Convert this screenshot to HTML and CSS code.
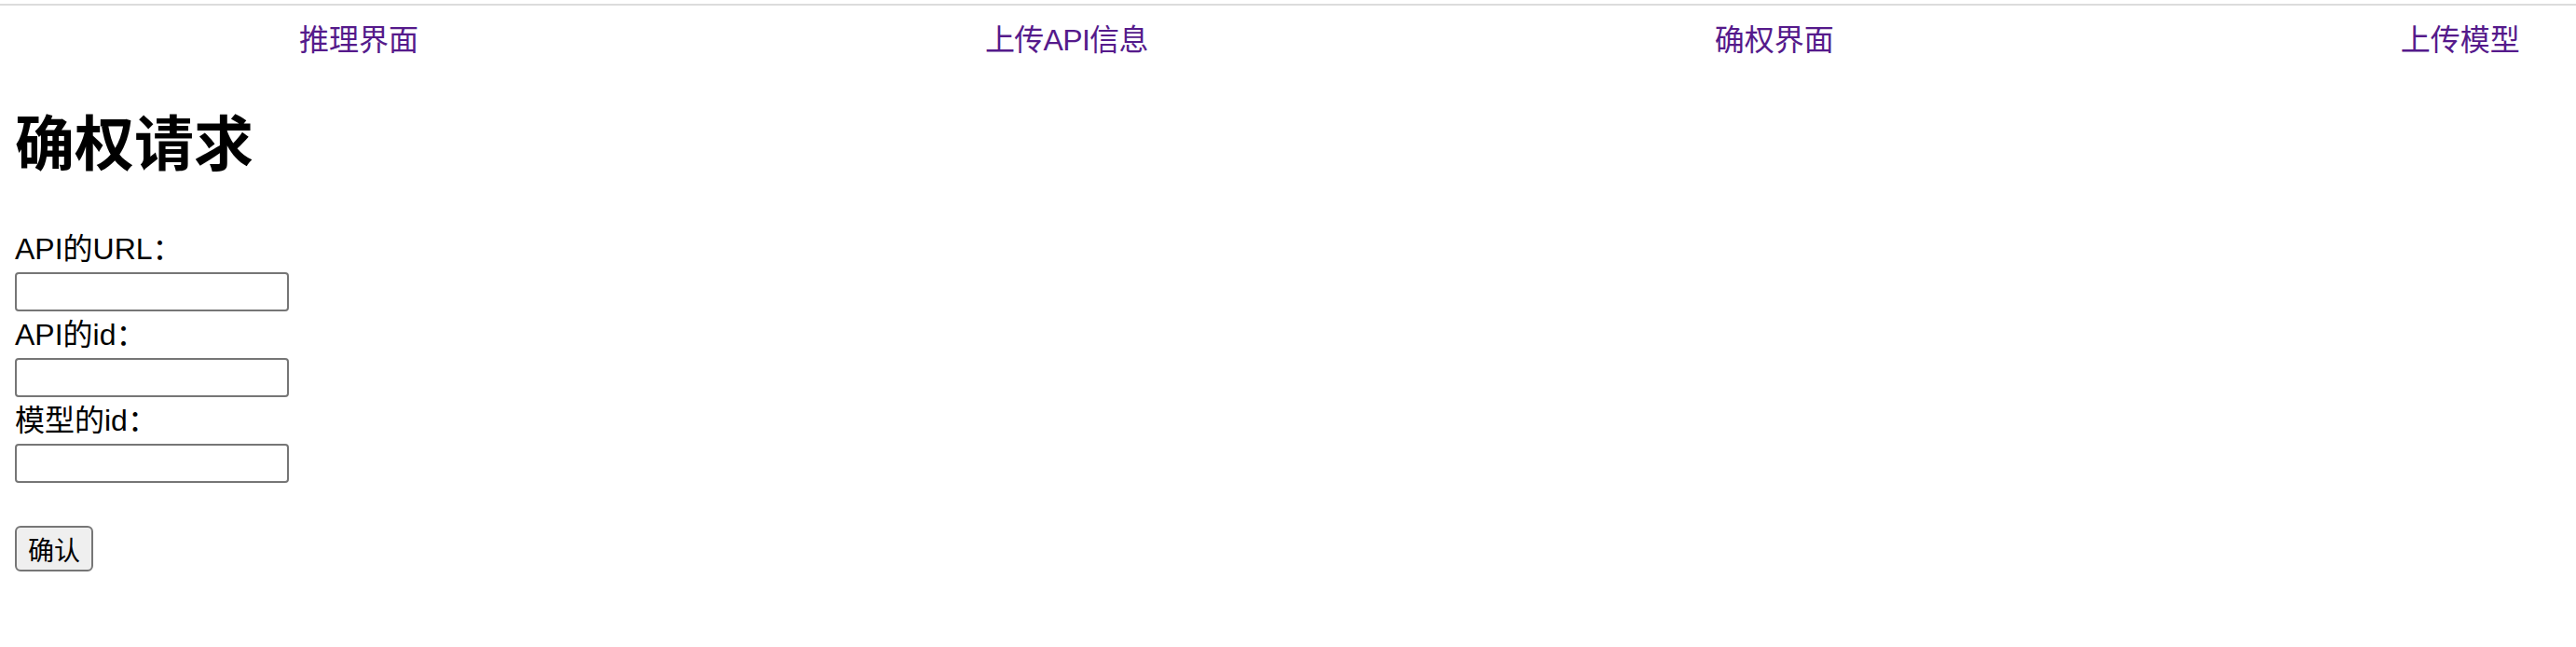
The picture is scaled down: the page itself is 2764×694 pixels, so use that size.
FILE: index.html
```html
<!DOCTYPE html>
<html lang="zh-CN">
<head>
<meta charset="utf-8">
<title>确权请求</title>
<link rel="stylesheet" href="styles.css">
</head>
<body>
<div class="topline"></div>
<div class="page">
  <nav class="nav">
    <a class="nav-link" href="#">推理界面</a>
    <a class="nav-link nav-link-latin" href="#">上传API信息</a>
    <a class="nav-link" href="#">确权界面</a>
    <a class="nav-link" href="#">上传模型</a>
  </nav>
  <h1 class="title">确权请求</h1>
  <form class="form">
    <label class="label" for="url">API的URL：</label>
    <input class="field" id="url" type="text">
    <label class="label" for="apiid">API的id：</label>
    <input class="field" id="apiid" type="text">
    <label class="label" for="modelid">模型的id：</label>
    <input class="field" id="modelid" type="text">
    <button class="btn" type="button">确认</button>
  </form>
</div>
</body>
</html>
```

FILE: styles.css
```css
html, body {
  margin: 0;
  padding: 0;
  background: #ffffff;
}
body {
  font-family: "Liberation Sans", "Noto Sans CJK SC", sans-serif;
  font-size: 32px;
  color: #000000;
}
.topline {
  margin-top: 4px;
  height: 2px;
  background: #dcdcdc;
}
.page {
  padding: 0 16px;
}
.nav {
  display: flex;
  gap: 608px;
  padding-left: 305px;
  margin-top: 14px;
  line-height: 46px;
  white-space: nowrap;
}
.nav-link {
  color: #551a8b;
  text-decoration: none;
}
.nav-link-latin {
  letter-spacing: -0.7px;
}
.title {
  font-size: 64px;
  font-weight: bold;
  line-height: 74px;
  margin: 52px 0 50px;
}
.form {
  display: flex;
  flex-direction: column;
  align-items: flex-start;
}
.label {
  display: block;
  line-height: 50px;
  height: 50px;
}
.field {
  box-sizing: border-box;
  width: 294px;
  height: 42px;
  border: 2px solid #767676;
  border-radius: 4px;
  padding: 2px 4px;
  font-size: 26px;
  background: #ffffff;
}
.btn {
  box-sizing: border-box;
  margin-top: 46px;
  width: 84px;
  height: 49px;
  padding: 0;
  border: 2px solid #767676;
  border-radius: 6px;
  background: #efefef;
  font-family: "Liberation Sans", "Noto Sans CJK SC", sans-serif;
  font-size: 28px;
  color: #000000;
}
```
